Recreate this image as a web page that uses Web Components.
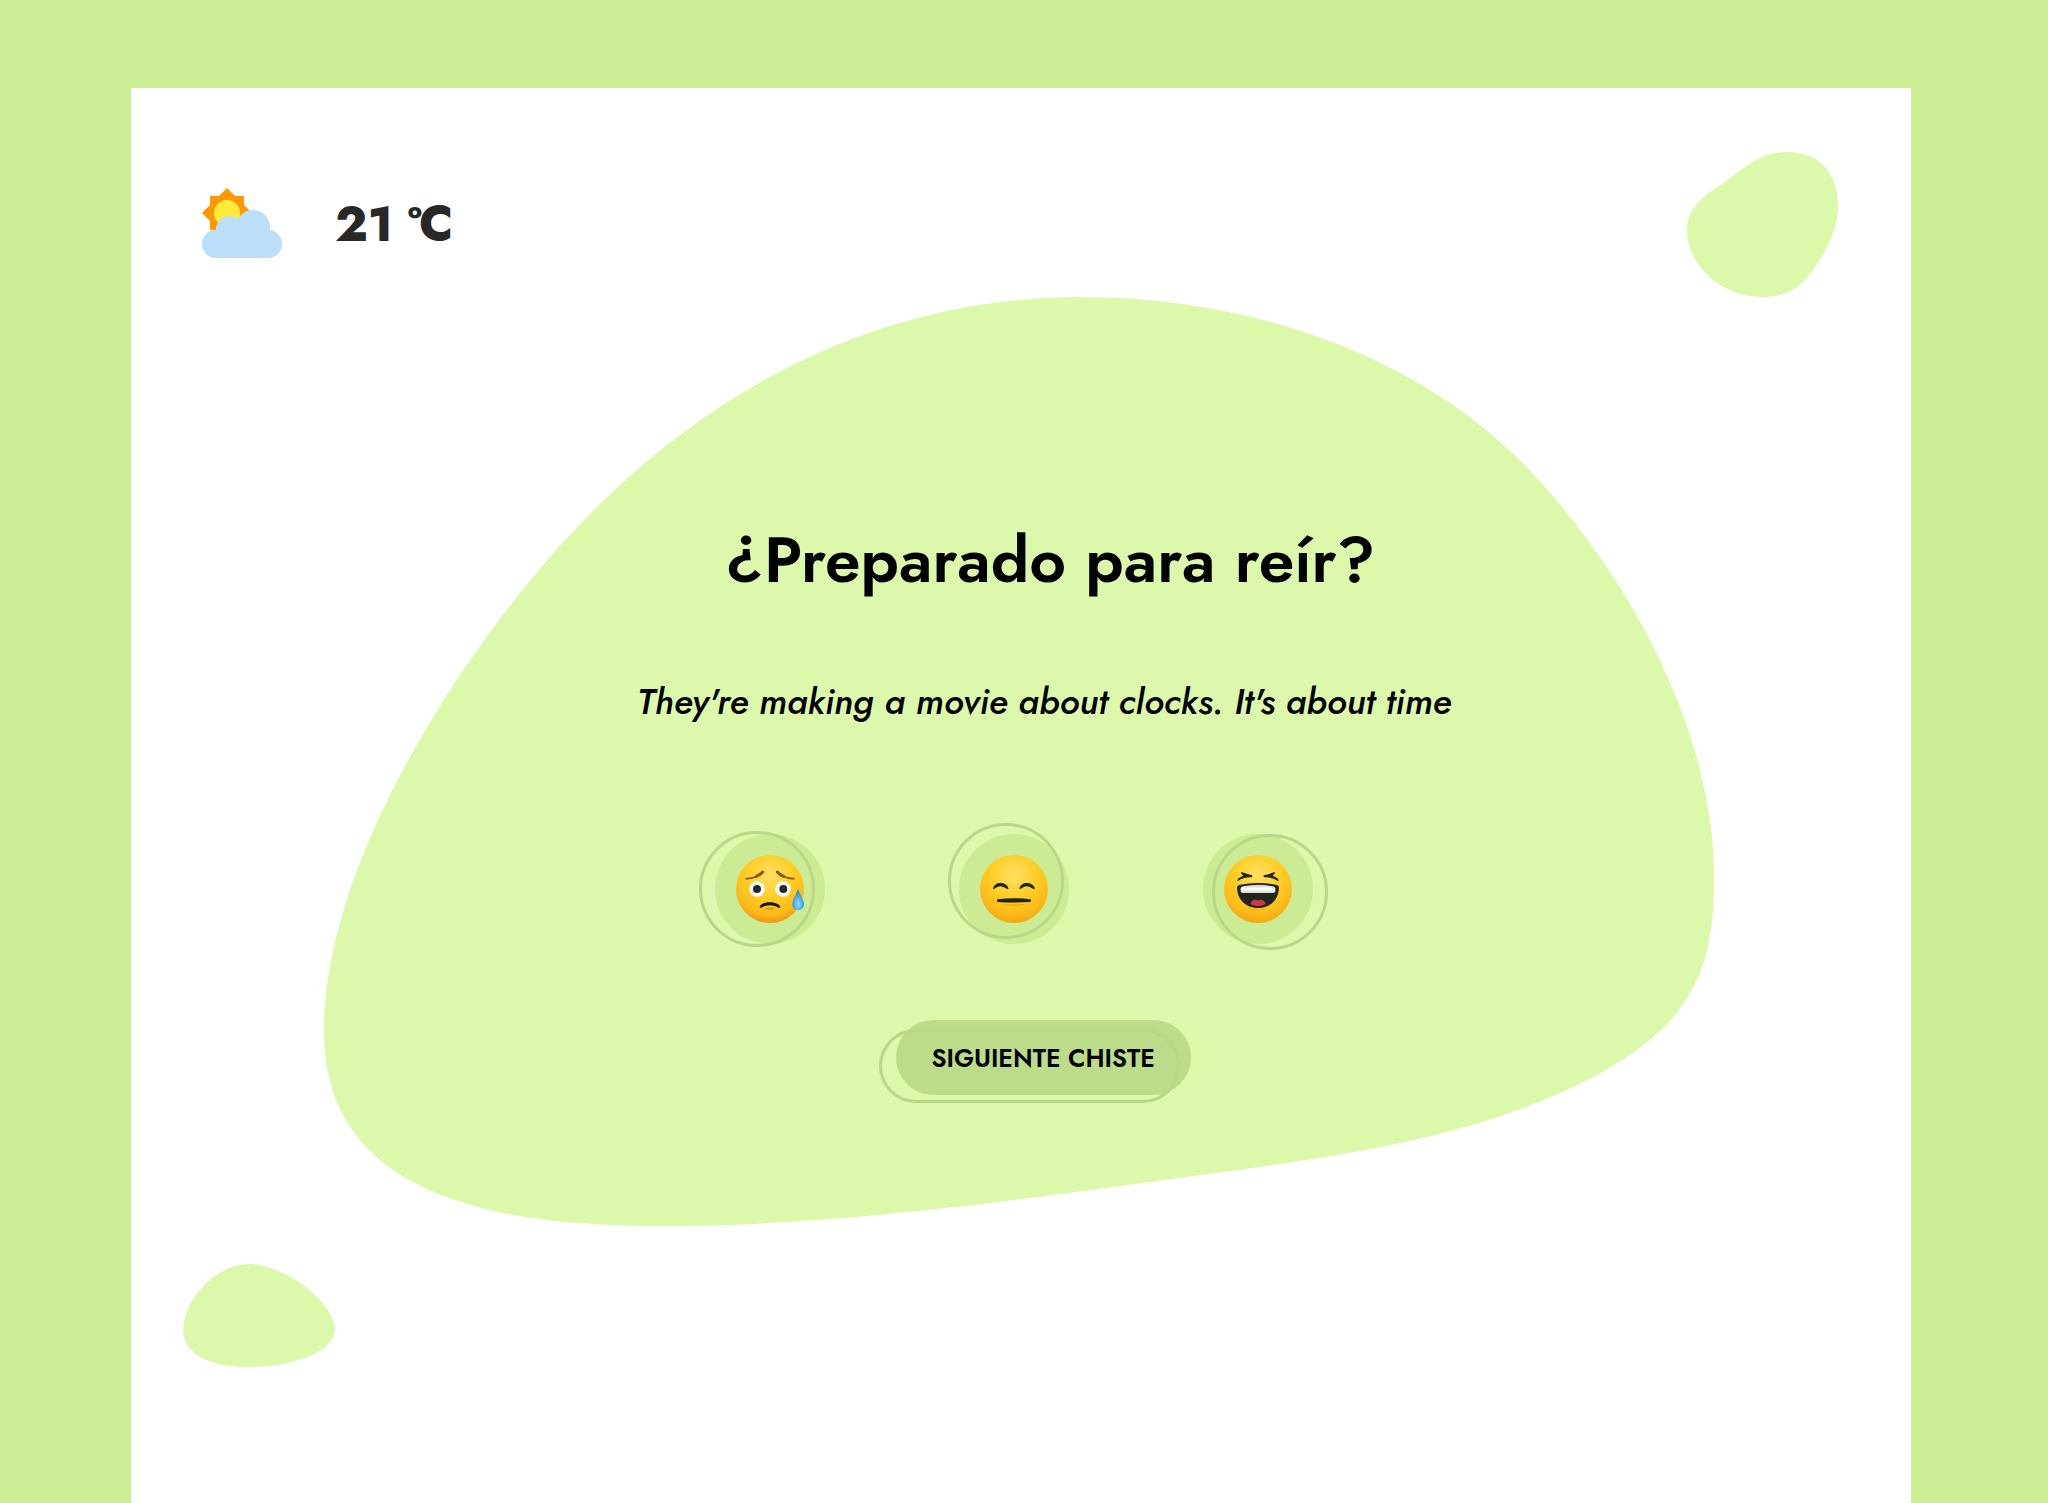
<!DOCTYPE html>
<html lang="es">
<head>
<meta charset="utf-8">
<meta name="viewport" content="width=device-width, initial-scale=1">
<title>Chistes</title>
<style>
  html { background: #cbed94; }
  body { margin: 0; font-family: Jost, Lato, "Open Sans", sans-serif; color: #000; }
</style>
</head>
<body>
<joke-app></joke-app>
<script>
function define(name, html) {
  const template = document.createElement('template');
  template.innerHTML = html;
  customElements.define(name, class extends HTMLElement {
    constructor() {
      super();
      this.attachShadow({ mode: 'open' }).append(template.content.cloneNode(true));
    }
  });
}

/* Sun behind a cloud, with the temperature in the slot */
define('weather-badge', `
  <style>
    :host { display: flex; align-items: center; gap: 53px; height: 70px; color: #282828; font-size: 48px; line-height: 64px; font-weight: 800; }
    svg { display: block; width: 80px; height: 70px; flex: none; }
    span { padding-top: 4px; }
  </style>
  <svg viewBox="276 354 240 210" aria-hidden="true">
    <path fill="#ff9800" d="M300 378H402V480H300ZM351 354L426 429L351 504L276 429Z"/>
    <circle cx="351" cy="429" r="39" fill="#ffeb3b"/>
    <g fill="#bbdefb">
      <circle cx="429" cy="471" r="51"/>
      <circle cx="357.500" cy="478" r="40"/>
      <rect x="276" y="480" width="240" height="84" rx="42"/>
      <rect x="330" y="465" width="140" height="60"/>
    </g>
  </svg>
  <span><slot></slot></span>
`);

/* Round vote button: tinted disc, offset ring, emoji */
const faces = {
  sad: `
    <circle cx="102" cy="102" r="102" fill="url(#skin)"/>
    <g fill="none" stroke="#875b1c" stroke-linecap="round">
      <path stroke-width="6" d="M31 71Q63 69 80 52"/><path stroke-width="9" d="M61 64Q72 60 80 51"/>
      <path stroke-width="6" d="M173 71Q141 69 124 52"/><path stroke-width="9" d="M143 64Q132 60 124 51"/>
    </g>
    <g fill="#fff"><circle cx="63" cy="102" r="23"/><circle cx="141" cy="102" r="23"/></g>
    <g fill="#26292b"><circle cx="63" cy="102" r="12"/><circle cx="142" cy="102" r="12"/></g>
    <path d="M86 161Q102 169 118 161Q102 154 86 161Z" fill="#e39a10"/>
    <path d="M71 155C78 137 126 137 133 155Q134 160 128 158C114 148 90 148 76 158Q70 160 71 155Z" fill="#15170f"/>
    <path d="M186 101C190 117 204 133 204 148C204 171 169 171 169 148C169 133 182 117 186 101Z" fill="url(#tear)"/>`,
  flat: `
    <circle cx="102" cy="102" r="102" fill="url(#skin)"/>
    <g fill="#20251d">
      <path d="M39 101C43 77 81 79 86 101Q82 104 76 99Q60 88 46 100Q40 104 39 101Z"/>
      <path d="M118 101C122 77 160 79 165 101Q161 104 155 99Q139 88 125 100Q119 104 118 101Z"/>
      <path d="M53 133Q102 126 151 133Q155 138 151 141Q102 144 53 141Q48 138 53 133Z"/>
    </g>
    <path d="M62 147Q102 150 142 147Q102 158 62 147Z" fill="#e5a211"/>`,
  laugh: `
    <circle cx="102" cy="102" r="102" fill="url(#skin)"/>
    <g fill="#20251d">
      <path d="M51 51Q74 58 84 61Q88 64 82 67Q59 66 42 78Q38 77 42 71Q47 66 58 62Q50 56 51 51Z"/>
      <path d="M153 51Q130 58 120 61Q116 64 122 67Q145 66 162 78Q166 77 162 71Q157 66 146 62Q154 56 153 51Z"/>
      <path d="M39 96Q39 91 48 89Q102 79 156 89Q165 91 165 96C165 132 140 159 102 159C64 159 39 132 39 96Z"/>
    </g>
    <path d="M50 100Q51 95 57 94Q102 85 147 94Q153 95 154 100V108Q154 114 148 114H56Q50 114 50 108Z" fill="url(#teeth)"/>
    <path d="M79 148C81 136 94 131 102 137C110 131 123 136 125 148Q102 159 79 148Z" fill="#cf3750"/>
    <path d="M70 158Q102 171 134 158Q102 167 70 158Z" fill="#e5a211"/>`
};
customElements.define('mood-button', class extends HTMLElement {
  constructor() {
    super();
    const mood = this.getAttribute('mood');
    this.attachShadow({ mode: 'open' }).innerHTML = `
      <style>
        :host { display: block; flex: none; }
        button { display: flex; align-items: center; justify-content: center; position: relative; width: 110px; height: 110px; padding: 0; border: 0; border-radius: 50%; background: #cbec94; cursor: pointer; }
        button::before { content: ""; position: absolute; width: 110px; height: 110px; border: 3px solid #bad789; border-radius: 50%; left: var(--ring-x); top: var(--ring-y); }
        svg { position: relative; display: block; width: 68px; height: 68px; overflow: visible; }
      </style>
      <button type="button" aria-label="${this.getAttribute('label')}">
        <svg viewBox="0 0 204 204" aria-hidden="true">
          <defs>
            <radialGradient id="skin" cx=".5" cy=".3" r=".72">
              <stop offset="0" stop-color="#ffdf63"/><stop offset=".5" stop-color="#ffcc22"/><stop offset=".8" stop-color="#fbb91a"/><stop offset="1" stop-color="${mood === 'sad' ? '#f09010' : '#efa514'}"/>
            </radialGradient>
            <radialGradient id="tear" cx=".5" cy=".72" r=".6">
              <stop offset="0" stop-color="#90dcff"/><stop offset=".5" stop-color="#55b4ee"/><stop offset="1" stop-color="#1987d5"/>
            </radialGradient>
            <linearGradient id="teeth" x2="0" y2="1"><stop offset="0" stop-color="#cfcbc4"/><stop offset=".5" stop-color="#fff"/><stop offset="1" stop-color="#d9d6d0"/></linearGradient>
          </defs>${faces[mood]}
        </svg>
      </button>`;
  }
});

define('next-button', `
  <style>
    :host { display: block; }
    button { position: relative; min-width: 295px; height: 75px; padding: 0 32px; border: 0; border-radius: 38px; background: #bcdc89; color: #000; font: inherit; font-size: 25px; font-weight: 600; text-transform: uppercase; cursor: pointer; white-space: nowrap; }
    button::before { content: ""; position: absolute; box-sizing: border-box; left: -17px; right: 11px; top: 9px; bottom: -8px; border: 3px solid #b9d887; border-radius: 38px; }
    span { position: relative; }
  </style>
  <button type="button"><span><slot></slot></span></button>
`);

/* Large blob that holds the joke and its controls */
define('joke-stage', `
  <style>
    :host { display: flex; flex-direction: column; align-items: center; position: relative; box-sizing: border-box; aspect-ratio: 1390 / 929; padding: 231px 0 0 48px; }
    svg { position: absolute; inset: 0; width: 100%; height: 100%; }
    h1, p { position: relative; margin: 0; text-align: center; }
    h1 { font-size: 64px; line-height: 64px; font-weight: 600; padding-left: 14px; }
    p { margin-top: 89px; font-size: 36px; line-height: 40px; font-style: italic; font-weight: 500; padding-left: 2px; }
    .moods { display: flex; gap: 134px; margin-top: 113px; padding-right: 58px; }
    next-button { margin-top: 76px; }
  </style>
  <svg viewBox="324 297 1390 929" preserveAspectRatio="none" aria-hidden="true">
    <path fill="#dcf9ab" d="M1080 297C1255 297 1424 357 1533 474C1628 576 1714 730 1714 878C1714 975 1689 1030 1577 1085C1460 1142 1323 1158 1194 1176C1017 1200 840 1226 659 1226C425 1226 324 1160 324 1030C324 885 428 704 533 577C676 403 865 297 1080 297Z"/>
  </svg>
  <h1><slot name="title"></slot></h1>
  <p><slot name="joke"></slot></p>
  <div class="moods">
    <mood-button mood="sad" label="Malo" style="--ring-x:-16px;--ring-y:-3px"></mood-button>
    <mood-button mood="flat" label="Regular" style="--ring-x:-11px;--ring-y:-11px"></mood-button>
    <mood-button mood="laugh" label="Bueno" style="--ring-x:9px;--ring-y:0px"></mood-button>
  </div>
  <next-button>Siguiente chiste</next-button>
`);

define('joke-app', `
  <style>
    :host { display: flex; box-sizing: border-box; min-height: 100vh; padding: 88px 137px 0 131px; background: #cbed94; }
    main { position: relative; flex: 1; min-width: 0; background: #fff; padding-top: 100px; }
    weather-badge { margin-left: 71px; }
    joke-stage { width: 78.1%; margin: 39px 0 0 10.85%; }
    .blob { position: absolute; fill: #dcf9ab; }
    .top { right: 73px; top: 64px; width: 151px; height: 145px; }
    .bottom { left: 52px; top: 1176px; width: 152px; height: 103px; }
  </style>
  <main>
    <svg class="blob top" viewBox="81 66 453 435" aria-hidden="true"><path d="M380 66C480 66 534 130 534 230C534 286 512 337 482 385C435 463 395 501 305 501C180 501 81 400 81 305C81 225 128 204 215 140C270 100 310 66 380 66Z"/></svg>
    <svg class="blob bottom" viewBox="69 71 456 310" aria-hidden="true"><path d="M270 71C370 71 525 185 525 270C525 335 400 381 270 381C150 381 69 345 69 268C69 190 155 71 270 71Z"/></svg>
    <weather-badge>21 ºC</weather-badge>
    <joke-stage>
      <span slot="title">¿Preparado para reír?</span>
      <span slot="joke">They're making a movie about clocks. It's about time</span>
    </joke-stage>
  </main>
`);
</script>
</body>
</html>
